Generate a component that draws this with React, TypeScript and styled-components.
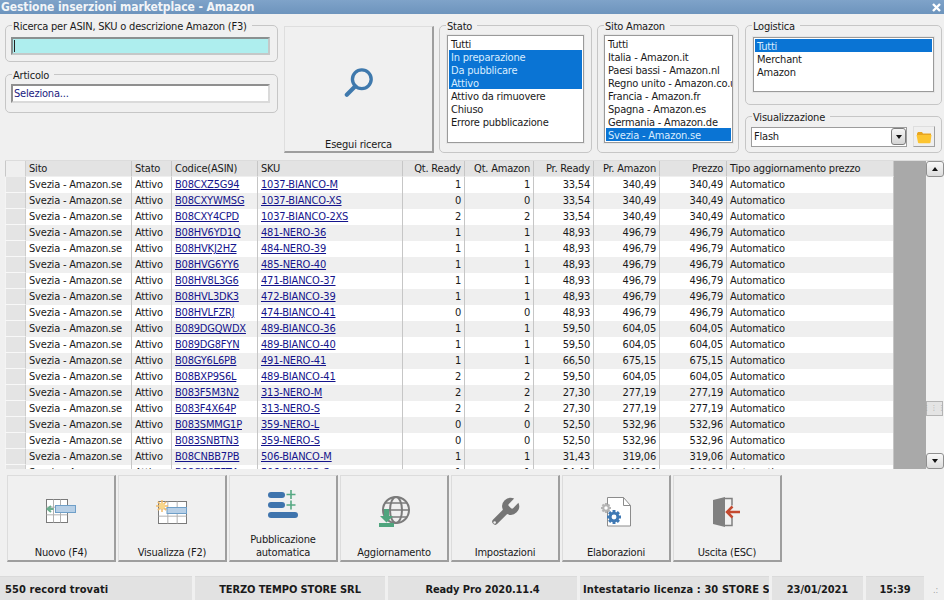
import styled, { createGlobalStyle } from 'styled-components'

const GlobalStyle = createGlobalStyle`
  html, body {
    margin: 0;
    padding: 0;
    background: #ffffff;
  }
  body {
    font-family: 'DejaVu Sans', Verdana, sans-serif;
    font-stretch: condensed;
    font-size: 11px;
    letter-spacing: -0.2px;
    color: #1a1a1a;
  }
`

const Window = styled.div`
  width: 944px;
  height: 600px;
  background: #f0f0f0;
  display: flex;
  flex-direction: column;
  overflow: hidden;
`

const TitleBar = styled.div`
  height: 14px;
  flex: none;
  display: flex;
  align-items: center;
  justify-content: space-between;
  padding: 0 3px 0 1px;
  background: linear-gradient(#7fa3c9, #6d94bd);
  overflow: hidden;
`

const TitleText = styled.span`
  font-size: 12px;
  font-weight: bold;
  line-height: 14px;
  letter-spacing: -0.08px;
  color: #f2f5f8;
`

const TopPanel = styled.div`
  height: 139px;
  flex: none;
  padding: 5px 0 0 5px;
  display: flex;
  align-items: flex-start;
`

const Column = styled.div<{ $width: number; $gap: number; $ml?: number }>`
  width: ${p => p.$width}px;
  margin-left: ${p => p.$ml ?? 0}px;
  display: flex;
  flex-direction: column;
  gap: ${p => p.$gap}px;
`

const Group = styled.fieldset<{ $width?: number; $height?: number; $pad: string; $ml?: number }>`
  box-sizing: border-box;
  margin: 0 0 0 ${p => p.$ml ?? 0}px;
  padding: ${p => p.$pad};
  min-width: 0;
  width: ${p => (p.$width ? `${p.$width}px` : 'auto')};
  height: ${p => (p.$height ? `${p.$height}px` : 'auto')};
  border: 1px solid #c6c6c6;
  border-radius: 5px;
`

const GroupTitle = styled.legend<{ $ml: number }>`
  padding: 0 5px 0 1px;
  margin-left: ${p => p.$ml}px;
  height: 13px;
  line-height: 15px;
  font-size: 11px;
`

const SearchInput = styled.div`
  height: 18px;
  box-sizing: border-box;
  background: #aeeeee;
  border: 2px solid #c4c8c8;
  border-top-color: #8a9090;
  border-left-color: #8a9090;
  display: flex;
  align-items: center;
  padding-left: 1px;
`

const Caret = styled.span`
  width: 1px;
  height: 12px;
  background: #222;
`

const ArticleInput = styled.div`
  height: 19px;
  box-sizing: border-box;
  background: #ffffff;
  border: 2px solid #dadada;
  border-top-color: #8f8f8f;
  border-left-color: #8f8f8f;
  color: #1a1a80;
  line-height: 15px;
  padding-left: 1px;
`

const SearchButton = styled.button`
  box-sizing: border-box;
  width: 150px;
  height: 127px;
  margin: 7px 0 0 6px;
  padding: 41px 0 0;
  background: #f0f0f0;
  border: 1px solid #dedede;
  border-right: 2px solid #9e9e9e;
  border-bottom: 2px solid #9e9e9e;
  font: inherit;
  letter-spacing: inherit;
  color: #1a1a1a;
  display: flex;
  flex-direction: column;
  align-items: center;
  justify-content: space-between;
`

const ListBox = styled.div<{ $height: number; $top: number }>`
  box-sizing: border-box;
  height: ${p => p.$height}px;
  padding: ${p => p.$top}px 1px 0;
  background: #ffffff;
  border: 1px solid #9a9a9a;
  outline: 1px solid #e6e6e6;
  overflow: hidden;
`

const ListItem = styled.div<{ $selected?: boolean }>`
  height: 13px;
  line-height: 15px;
  padding-left: 2px;
  white-space: nowrap;
  background: ${p => (p.$selected ? '#0a74d4' : 'transparent')};
  color: ${p => (p.$selected ? '#d8ecff' : '#1a1a1a')};
`

const ComboRow = styled.div`
  display: flex;
  align-items: center;
`

const Combo = styled.div`
  box-sizing: border-box;
  width: 156px;
  height: 20px;
  background: #ffffff;
  border: 1px solid #9c9c9c;
  display: flex;
  align-items: center;
  justify-content: space-between;
  padding: 0 0 0 2px;
`

const ComboArrow = styled.div`
  width: 15px;
  height: 17px;
  box-sizing: border-box;
  border: 1px solid #7c7c7c;
  border-radius: 3px;
  background: linear-gradient(#f6f6f6, #d4d4d4);
  display: flex;
  align-items: center;
  justify-content: center;
`

const ArrowDown = styled.span`
  border-left: 3.5px solid transparent;
  border-right: 3.5px solid transparent;
  border-top: 4px solid #111;
`

const ArrowUp = styled.span`
  border-left: 3.5px solid transparent;
  border-right: 3.5px solid transparent;
  border-bottom: 4px solid #111;
`

const FolderButton = styled.div`
  box-sizing: border-box;
  width: 22px;
  height: 21px;
  margin-left: 6px;
  background: #efefef;
  border: 1px solid #dedede;
  border-right: 1px solid #a0a0a0;
  border-bottom: 1px solid #a0a0a0;
  display: flex;
  align-items: center;
  justify-content: center;
`

const GridArea = styled.div`
  height: 309px;
  flex: none;
  margin: 2px 0 0 5px;
  display: flex;
  border-top: 1px solid #dcdcdc;
  box-sizing: border-box;
  overflow: hidden;
`

const Table = styled.table`
  width: 889px;
  flex: none;
  table-layout: fixed;
  border-collapse: separate;
  border-spacing: 0;
  align-self: flex-start;
`

const HeaderCell = styled.th<{ $right?: boolean }>`
  height: 15px;
  padding: 0 3px;
  font-weight: normal;
  line-height: 15px;
  background: #e3e3e3;
  border-right: 1px solid #c6c6c6;
  border-bottom: 1px solid #efefef;
  text-align: ${p => (p.$right ? 'right' : 'left')};
  white-space: nowrap;
  overflow: hidden;
`

const Corner = styled.th`
  padding: 0;
  background: #efefef;
  border-left: 1px solid #c8c8c8;
  border-right: 1px solid #d0d0d0;
  border-bottom: 1px solid #efefef;
`

const Row = styled.tr<{ $odd: boolean }>`
  background: ${p => (p.$odd ? '#efefef' : '#ffffff')};
`

const Selector = styled.td`
  padding: 0;
  height: 15px;
  background: #e4e4e4;
  border-left: 1px solid #f4f4f4;
  border-right: 1px solid #cdcdcd;
  border-bottom: 1px solid #f8f8f8;
`

const Cell = styled.td<{ $right?: boolean }>`
  height: 16px;
  padding: 0 3px;
  line-height: 16px;
  border-right: 1px solid #c6c6c6;
  text-align: ${p => (p.$right ? 'right' : 'left')};
  white-space: nowrap;
  overflow: hidden;
`

const LinkText = styled.span`
  color: #14148c;
  text-decoration: underline;
`

const GreyFill = styled.div`
  flex: none;
  width: 32px;
  background: #a9a9a9;
`

const ScrollBar = styled.div`
  width: 18px;
  flex: none;
  display: flex;
  flex-direction: column;
  justify-content: space-between;
  background: #f2f2f2;
`

const ScrollTrack = styled.div`
  flex: 1;
  padding-top: 224px;
`

const ScrollButton = styled.div`
  box-sizing: border-box;
  height: 16px;
  border: 1px solid #8f8f8f;
  border-radius: 3px;
  background: linear-gradient(#f8f8f8, #dcdcdc);
  display: flex;
  align-items: center;
  justify-content: center;
`

const ScrollThumb = styled.div`
  box-sizing: border-box;
  height: 15px;
  margin-right: 1px;
  border: 1px solid #b4b4b4;
  background: #e4e4e4;
  display: flex;
  align-items: center;
  justify-content: center;
  color: #9a9a9a;
  font-size: 7px;
  line-height: 7px;
  letter-spacing: 1px;
`

const ActionBar = styled.div`
  flex: none;
  display: flex;
  gap: 2px;
  padding: 6px 0 0 7px;
`

const ActionButton = styled.button`
  box-sizing: border-box;
  width: 109px;
  height: 87px;
  padding: 0 0 1px;
  background: #f0f0f0;
  border: 1px solid #dcdcdc;
  border-right: 2px solid #9e9e9e;
  border-bottom: 2px solid #9e9e9e;
  font: inherit;
  letter-spacing: inherit;
  line-height: 13px;
  color: #1a1a1a;
  display: flex;
  flex-direction: column;
  align-items: center;
  justify-content: space-between;
`

const IconSlot = styled.div<{ $top: number }>`
  margin-top: ${p => p.$top}px;
  display: flex;
`

const StatusBar = styled.div`
  flex: none;
  margin-top: 14px;
  height: 24px;
  display: flex;
  gap: 3px;
  background: #f0f0f0;
`

const StatusCell = styled.div<{ $width: number; $left?: number }>`
  box-sizing: border-box;
  width: ${p => p.$width}px;
  flex: none;
  padding: ${p => (p.$left ? `0 0 0 ${p.$left}px` : '0 4px')};
  background: #e2e2e2;
  border-top: 1px solid #dadada;
  font-weight: bold;
  letter-spacing: ${p => (p.$left ? '0.1px' : '-0.1px')};
  line-height: 25px;
  text-align: ${p => (p.$left ? 'left' : 'center')};
  white-space: nowrap;
  overflow: hidden;
`

const Grip = styled.div`
  flex: 1;
  background: #f0f0f0;
  color: #a0a0a0;
  font-size: 9px;
  line-height: 28px;
  text-align: center;
`

const columns = [
  { label: 'Sito', width: 106 },
  { label: 'Stato', width: 40 },
  { label: 'Codice(ASIN)', width: 86 },
  { label: 'SKU', width: 145 },
  { label: 'Qt. Ready', width: 62, right: true },
  { label: 'Qt. Amazon', width: 69, right: true },
  { label: 'Pr. Ready', width: 60, right: true },
  { label: 'Pr. Amazon', width: 66, right: true },
  { label: 'Prezzo', width: 67, right: true },
  { label: 'Tipo aggiornamento prezzo', width: 167 }
]

const rows: [string, string, string, string, string, string][] = [
  ['B08CXZ5G94', '1037-BIANCO-M', '1', '33,54', '340,49', '340,49'],
  ['B08CXYWMSG', '1037-BIANCO-XS', '0', '33,54', '340,49', '340,49'],
  ['B08CXY4CPD', '1037-BIANCO-2XS', '2', '33,54', '340,49', '340,49'],
  ['B08HV6YD1Q', '481-NERO-36', '1', '48,93', '496,79', '496,79'],
  ['B08HVKJ2HZ', '484-NERO-39', '1', '48,93', '496,79', '496,79'],
  ['B08HVG6YY6', '485-NERO-40', '1', '48,93', '496,79', '496,79'],
  ['B08HV8L3G6', '471-BIANCO-37', '1', '48,93', '496,79', '496,79'],
  ['B08HVL3DK3', '472-BIANCO-39', '1', '48,93', '496,79', '496,79'],
  ['B08HVLFZRJ', '474-BIANCO-41', '0', '48,93', '496,79', '496,79'],
  ['B089DGQWDX', '489-BIANCO-36', '1', '59,50', '604,05', '604,05'],
  ['B089DG8FYN', '489-BIANCO-40', '1', '59,50', '604,05', '604,05'],
  ['B08GY6L6PB', '491-NERO-41', '1', '66,50', '675,15', '675,15'],
  ['B08BXP9S6L', '489-BIANCO-41', '2', '59,50', '604,05', '604,05'],
  ['B083F5M3N2', '313-NERO-M', '2', '27,30', '277,19', '277,19'],
  ['B083F4X64P', '313-NERO-S', '2', '27,30', '277,19', '277,19'],
  ['B083SMMG1P', '359-NERO-L', '0', '52,50', '532,96', '532,96'],
  ['B083SNBTN3', '359-NERO-S', '0', '52,50', '532,96', '532,96'],
  ['B08CNBB7PB', '506-BIANCO-M', '1', '31,43', '319,06', '319,06'],
  ['B08CN8ZFT4', '506-BIANCO-S', '1', '34,43', '349,96', '349,96']
]

const statoItems = ['Tutti', 'In preparazione', 'Da pubblicare', 'Attivo', 'Attivo da rimuovere', 'Chiuso', 'Errore pubblicazione']
const statoSelected = ['In preparazione', 'Da pubblicare', 'Attivo']
const sitoItems = [
  'Tutti',
  'Italia - Amazon.it',
  'Paesi bassi - Amazon.nl',
  'Regno unito - Amazon.co.uk',
  'Francia - Amazon.fr',
  'Spagna - Amazon.es',
  'Germania - Amazon.de',
  'Svezia - Amazon.se'
]

const MagnifierIcon = () => (
  <svg width="30" height="30" viewBox="0 0 32 32">
    <circle cx="19" cy="12" r="10" fill="none" stroke="#3f79ad" strokeWidth="3.6" />
    <path d="M12 19.5 3 28.5" stroke="#3f79ad" strokeWidth="4.4" strokeLinecap="round" />
  </svg>
)

const FolderIcon = () => (
  <svg width="18" height="14" viewBox="0 0 16 14">
    <path d="M1 3.5 2 2h4l1 1.5h8V5H1z" fill="#e8a520" />
    <path d="M0.5 5h15l-1 7.5a1 1 0 0 1-1 .8h-10.500a1 1 0 0 1-1-.8z" fill="#fcc430" />
  </svg>
)

const GridLines = ({ x, y, w, h }: { x: number; y: number; w: number; h: number }) => (
  <g stroke="#7a7a7a" strokeWidth="1" fill="#ffffff">
    <rect x={x} y={y} width={w} height={h} />
    <path
      d={`M${x + w / 3} ${y}V${y + h}M${x + (2 * w) / 3} ${y}V${y + h}M${x} ${y + h / 3}H${x + w}M${x} ${y + (2 * h) / 3}H${x + w}`}
      stroke="#b0b0b0"
    />
  </g>
)

const NewIcon = () => (
  <svg width="32" height="26" viewBox="0 0 32 26">
    <GridLines x={1.5} y={1.500} w={21} h={23} />
    <rect x="10.500" y="7.500" width="20" height="7" fill="#b7cfe6" stroke="#6f9fc8" />
    <path d="M8.500 11H4M6 8 2.500 11 6 14" fill="none" stroke="#6cae8e" strokeWidth="2" />
  </svg>
)

const ViewIcon = () => (
  <svg width="32" height="26" viewBox="0 0 32 26">
    <GridLines x={2.500} y={2.500} w={28} h={22} />
    <rect x="11" y="8.500" width="19.500" height="6" fill="#b7cfe6" stroke="#6f9fc8" />
    <g stroke="#f2bc6a" strokeWidth="1.500">
      <path d="M6 1v12M0 7h12M1.800 2.800l8.400 8.400M1.800 11.200l8.400-8.400" />
    </g>
    <circle cx="6" cy="7" r="3" fill="#f8d68a" />
  </svg>
)

const PublishIcon = () => (
  <svg width="32" height="30" viewBox="0 0 32 30">
    <g fill="#3f74ad">
      <rect x="1" y="2" width="17" height="6" rx="3" />
      <rect x="1" y="12" width="17" height="6" rx="3" />
      <rect x="1" y="22" width="30" height="6" rx="3" />
    </g>
    <path d="M24 0v9M19.500 4.500h9M24 10.500v9M19.500 15h9" stroke="#56a883" strokeWidth="1.600" />
  </svg>
)

const GlobeIcon = () => (
  <svg width="32" height="32" viewBox="0 0 32 32">
    <g fill="none" stroke="#7b7b7b" strokeWidth="2">
      <circle cx="18" cy="14" r="13" />
      <ellipse cx="18" cy="14" rx="6" ry="13" />
      <path d="M5 14h26M7 7h22M7 21h22" strokeWidth="1.500" />
    </g>
    <path d="M6 13h5v7h4l-6.500 6.500L2 20h4z" fill="#4fa57e" />
    <rect x="1" y="27" width="15" height="4" fill="#4fa57e" />
  </svg>
)

const WrenchIcon = () => (
  <svg width="34" height="34" viewBox="0 0 24 24">
    <path
      d="M14.700 6.300a1 1 0 0 0 0 1.400l1.600 1.600a1 1 0 0 0 1.400 0l3.770-3.770a6 6 0 0 1-7.940 7.940l-6.910 6.910a2.120 2.120 0 0 1-3-3l6.910-6.910a6 6 0 0 1 7.940-7.940l-3.760 3.760z"
      fill="#757575"
    />
    <circle cx="4.700" cy="19.400" r="0.900" fill="#f0f0f0" />
  </svg>
)

const Gear = ({ cx, cy, r, color }: { cx: number; cy: number; r: number; color: string }) => (
  <g>
    <g stroke={color} strokeWidth={r * 0.42}>
      <path d={`M${cx} ${cy - r}V${cy + r}M${cx - r} ${cy}H${cx + r}`} />
      <path
        d={`M${cx - r * 0.7} ${cy - r * 0.7}L${cx + r * 0.7} ${cy + r * 0.7}M${cx - r * 0.7} ${cy + r * 0.7}L${cx + r * 0.7} ${cy - r * 0.7}`}
      />
    </g>
    <circle cx={cx} cy={cy} r={r * 0.55} fill="#ffffff" stroke={color} strokeWidth={r * 0.4} />
  </g>
)

const ProcessIcon = () => (
  <svg width="32" height="32" viewBox="0 0 32 32">
    <path d="M7.500 1.500h16l7 8v20.500h-23z" fill="#ffffff" stroke="#8c8c8c" />
    <path d="M23.500 1.500v8h7" fill="none" stroke="#8c8c8c" />
    <Gear cx={6} cy={12} r={5} color="#b4b4b4" />
    <Gear cx={14} cy={21} r={7} color="#3f79b4" />
  </svg>
)

const ExitIcon = () => (
  <svg width="30" height="32" viewBox="0 0 30 32">
    <path d="M1 4 13 1v30L1 28z" fill="#808080" />
    <path d="M13 2.500h7v7M20 21v8.500h-7" fill="none" stroke="#808080" strokeWidth="1.500" />
    <path d="M28 16H15M20.500 10.500 15 16l5.500 5.500" fill="none" stroke="#c4492f" strokeWidth="2.500" />
  </svg>
)

const actions = [
  { label: ['Nuovo (F4)'], icon: <NewIcon />, top: 22 },
  { label: ['Visualizza (F2)'], icon: <ViewIcon />, top: 23 },
  { label: ['Pubblicazione', 'automatica'], icon: <PublishIcon />, top: 14 },
  { label: ['Aggiornamento'], icon: <GlobeIcon />, top: 20 },
  { label: ['Impostazioni'], icon: <WrenchIcon />, top: 19 },
  { label: ['Elaborazioni'], icon: <ProcessIcon />, top: 20 },
  { label: ['Uscita (ESC)'], icon: <ExitIcon />, top: 20 }
]

export default function App() {
  return (
    <>
      <GlobalStyle />
      <Window>
        <TitleBar>
          <TitleText>Gestione inserzioni marketplace - Amazon</TitleText>
          <svg width="9" height="9" viewBox="0 0 9 9">
            <path d="M1 1l7 7M8 1 1 8" stroke="#ffffff" strokeWidth="2.400" />
          </svg>
        </TitleBar>

        <TopPanel>
          <Column $width={273} $gap={6}>
            <Group $pad="5px 7px 6px 5px">
              <GroupTitle $ml={1}>Ricerca per ASIN, SKU o descrizione Amazon (F3)</GroupTitle>
              <SearchInput>
                <Caret />
              </SearchInput>
            </Group>
            <Group $pad="3px 7px 9px 5px">
              <GroupTitle $ml={1}>Articolo</GroupTitle>
              <ArticleInput>Seleziona...</ArticleInput>
            </Group>
          </Column>

          <SearchButton>
            <MagnifierIcon />
            <span>Esegui ricerca</span>
          </SearchButton>

          <Group $width={153} $height={134} $ml={5} $pad="3px 7px 0">
            <GroupTitle $ml={-1}>Stato</GroupTitle>
            <ListBox $height={108} $top={1}>
              {statoItems.map(item => (
                <ListItem key={item} $selected={statoSelected.includes(item)}>
                  {item}
                </ListItem>
              ))}
            </ListBox>
          </Group>

          <Group $width={142} $height={134} $ml={5} $pad="3px 5px 0 6px">
            <GroupTitle $ml={0}>Sito Amazon</GroupTitle>
            <ListBox $height={108} $top={1}>
              {sitoItems.map(item => (
                <ListItem key={item} $selected={item === 'Svezia - Amazon.se'}>
                  {item}
                </ListItem>
              ))}
            </ListBox>
          </Group>

          <Column $width={197} $gap={5} $ml={6}>
            <Group $height={86} $pad="5px 7px 0">
              <GroupTitle $ml={-1}>Logistica</GroupTitle>
              <ListBox $height={55} $top={1}>
                {['Tutti', 'Merchant', 'Amazon'].map(item => (
                  <ListItem key={item} $selected={item === 'Tutti'}>
                    {item}
                  </ListItem>
                ))}
              </ListBox>
            </Group>
            <Group $height={43} $pad="3px 6px 0 5px">
              <GroupTitle $ml={1}>Visualizzazione</GroupTitle>
              <ComboRow>
                <Combo>
                  Flash
                  <ComboArrow>
                    <ArrowDown />
                  </ComboArrow>
                </Combo>
                <FolderButton>
                  <FolderIcon />
                </FolderButton>
              </ComboRow>
            </Group>
          </Column>
        </TopPanel>

        <GridArea>
          <Table>
            <colgroup>
              <col width={21} />
              {columns.map(col => (
                <col key={col.label} width={col.width} />
              ))}
            </colgroup>
            <thead>
              <tr>
                <Corner />
                {columns.map(col => (
                  <HeaderCell key={col.label} $right={col.right}>
                    {col.label}
                  </HeaderCell>
                ))}
              </tr>
            </thead>
            <tbody>
              {rows.map((row, i) => (
                <Row key={row[0]} $odd={i % 2 === 1}>
                  <Selector />
                  <Cell>Svezia - Amazon.se</Cell>
                  <Cell>Attivo</Cell>
                  <Cell>
                    <LinkText>{row[0]}</LinkText>
                  </Cell>
                  <Cell>
                    <LinkText>{row[1]}</LinkText>
                  </Cell>
                  <Cell $right>{row[2]}</Cell>
                  <Cell $right>{row[2]}</Cell>
                  <Cell $right>{row[3]}</Cell>
                  <Cell $right>{row[4]}</Cell>
                  <Cell $right>{row[5]}</Cell>
                  <Cell>Automatico</Cell>
                </Row>
              ))}
            </tbody>
          </Table>
          <GreyFill />
          <ScrollBar>
            <ScrollButton>
              <ArrowUp />
            </ScrollButton>
            <ScrollTrack>
              <ScrollThumb>⋮⋮⋮</ScrollThumb>
            </ScrollTrack>
            <ScrollButton>
              <ArrowDown />
            </ScrollButton>
          </ScrollBar>
        </GridArea>

        <ActionBar>
          {actions.map(action => (
            <ActionButton key={action.label[0]}>
              <IconSlot $top={action.top}>{action.icon}</IconSlot>
              <span>
                {action.label.map(line => (
                  <div key={line}>{line}</div>
                ))}
              </span>
            </ActionButton>
          ))}
        </ActionBar>

        <StatusBar>
          <StatusCell $width={192} $left={5}>
            550 record trovati
          </StatusCell>
          <StatusCell $width={190}>TERZO TEMPO STORE SRL</StatusCell>
          <StatusCell $width={189}>Ready Pro 2020.11.4</StatusCell>
          <StatusCell $width={189} $left={3}>
            Intestatario licenza : 30 STORE SRL
          </StatusCell>
          <StatusCell $width={91}>23/01/2021</StatusCell>
          <StatusCell $width={58}>15:39</StatusCell>
          <Grip>.:</Grip>
        </StatusBar>
      </Window>
    </>
  )
}
